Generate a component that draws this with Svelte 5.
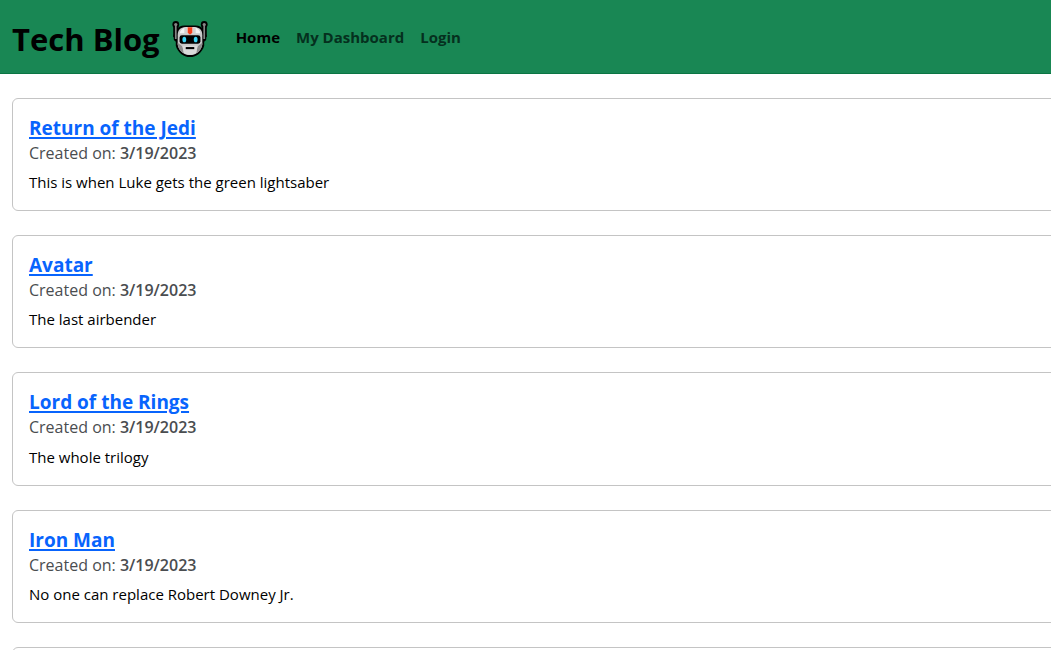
<script>
  const links = [
    { label: 'Home', active: true },
    { label: 'My Dashboard', active: false },
    { label: 'Login', active: false },
  ];
  const posts = [
    { title: 'Return of the Jedi', date: '3/19/2023', text: 'This is when Luke gets the green lightsaber' },
    { title: 'Avatar', date: '3/19/2023', text: 'The last airbender' },
    { title: 'Lord of the Rings', date: '3/19/2023', text: 'The whole trilogy' },
    { title: 'Iron Man', date: '3/19/2023', text: 'No one can replace Robert Downey Jr.' },
    { title: '', date: '', text: '' },
  ];
</script>

<div class="page">
  <header class="navbar">
    <a class="brand" href="#home">
      <span>Tech Blog</span>
      <svg viewBox="0 0 38 38" aria-hidden="true">
        <path d="M4 3.5V17M34 3.5V17" stroke="#000" stroke-width="5.4" />
        <circle cx="4" cy="3.7" r="3.6" /><circle cx="34" cy="3.7" r="3.6" />
        <path d="M1.5 15L2 20L4 22V26C6 33 12 38 19 38S32 33 34 26V22L36 20L36.5 15L33 9C31 6 29 4.7 25 4.7H13C9 4.7 7 6 5 9Z" />
        <path d="M4 3.5V19M34 3.5V19" stroke="#858585" stroke-width="1.8" />
        <circle cx="4" cy="3.7" r="1.7" fill="#858585" /><circle cx="34" cy="3.7" r="1.7" fill="#858585" />
        <path d="M6 15C6 9 9.5 6.7 14 6.7H24C28.5 6.7 32 9 32 15V25C30.5 32 25 36 19 36S7.5 32 6 25Z" fill="#c8c8c8" />
        <path d="M8 13C9 9 12 7 15 6.7H24C27 7.5 29.5 10 30 13Z" fill="#f2f2f2" />
        <path d="M13 7H16V14H13ZM22 7H25V14H22Z" fill="#d2d2d2" />
        <path d="M6 23 11 27 12.5 34C8.5 32 6 28 6 23ZM32 23 27 27 25.5 34C29.5 32 32 28 32 23Z" fill="#8b8b8b" />
        <path d="M11 26H27L25.5 34Q19 37 12.500 34Z" fill="#dadada" />
        <path d="M16.5 6.7H21.5V12L20 14H18L16.5 12Z" fill="#f5401c" />
        <rect x="8" y="15" width="22" height="9" rx="2.5" />
        <ellipse cx="13" cy="19.5" rx="2" ry="3" fill="#3bd5f5" />
        <ellipse cx="25" cy="19.5" rx="2" ry="3" fill="#3bd5f5" />
        <rect x="14.5" y="27.500" width="9" height="2.2" />
      </svg>
    </a>
    <nav>
      {#each links as link}
        <a class:active={link.active} href="#{link.label}">{link.label}</a>
      {/each}
    </nav>
  </header>

  <main>
    {#each posts as post}
      <article>
        {#if post.title}
          <h2><a href="#{post.title}">{post.title}</a></h2>
          <p class="created">Created on: <strong>{post.date}</strong></p>
          <p class="text">{post.text}</p>
        {/if}
      </article>
    {/each}
  </main>
</div>

<style>
  :global(body) {
    background: #fff;
  }
  .page {
    height: 100vh;
    overflow: hidden;
    font-family: 'Open Sans', 'Noto Sans', sans-serif;
    font-size: 15px;
    line-height: 24px;
    color: #000;
  }
  .navbar {
    display: flex;
    align-items: center;
    gap: 28px;
    height: 73px;
    padding: 0 12px;
    background: #198754;
    border-bottom: 1px solid #0b7543;
  }
  .navbar a {
    text-decoration: none;
  }
  .brand {
    display: flex;
    align-items: center;
    gap: 12px;
    padding-top: 4px;
    font-size: 31px;
    font-weight: 700;
    line-height: 48px;
    color: #000;
  }
  .brand svg {
    width: 36px;
    height: 36px;
  }
  nav {
    display: flex;
    gap: 16px;
    font-weight: 700;
  }
  nav a {
    color: #05301e;
  }
  nav a.active {
    color: #000;
  }
  main {
    display: flex;
    flex-direction: column;
    gap: 24px;
    margin: 24px -24px 0 12px;
  }
  article {
    box-sizing: border-box;
    min-height: 113px;
    padding: 17px 16px 16px;
    border: 1px solid #c4c4c4;
    border-radius: 6px;
  }
  h2,
  p {
    margin: 0;
  }
  h2 {
    font-size: 19px;
    font-weight: 700;
    line-height: 24px;
  }
  h2 a {
    color: #0864fd;
    text-underline-offset: 2px;
    text-decoration-thickness: 2px;
  }
  .created {
    margin: 4px 0 7px;
    font-size: 16px;
    font-weight: 500;
    line-height: 1.2;
    color: #4a4d50;
  }
  .created strong {
    font-weight: 600;
  }
</style>
